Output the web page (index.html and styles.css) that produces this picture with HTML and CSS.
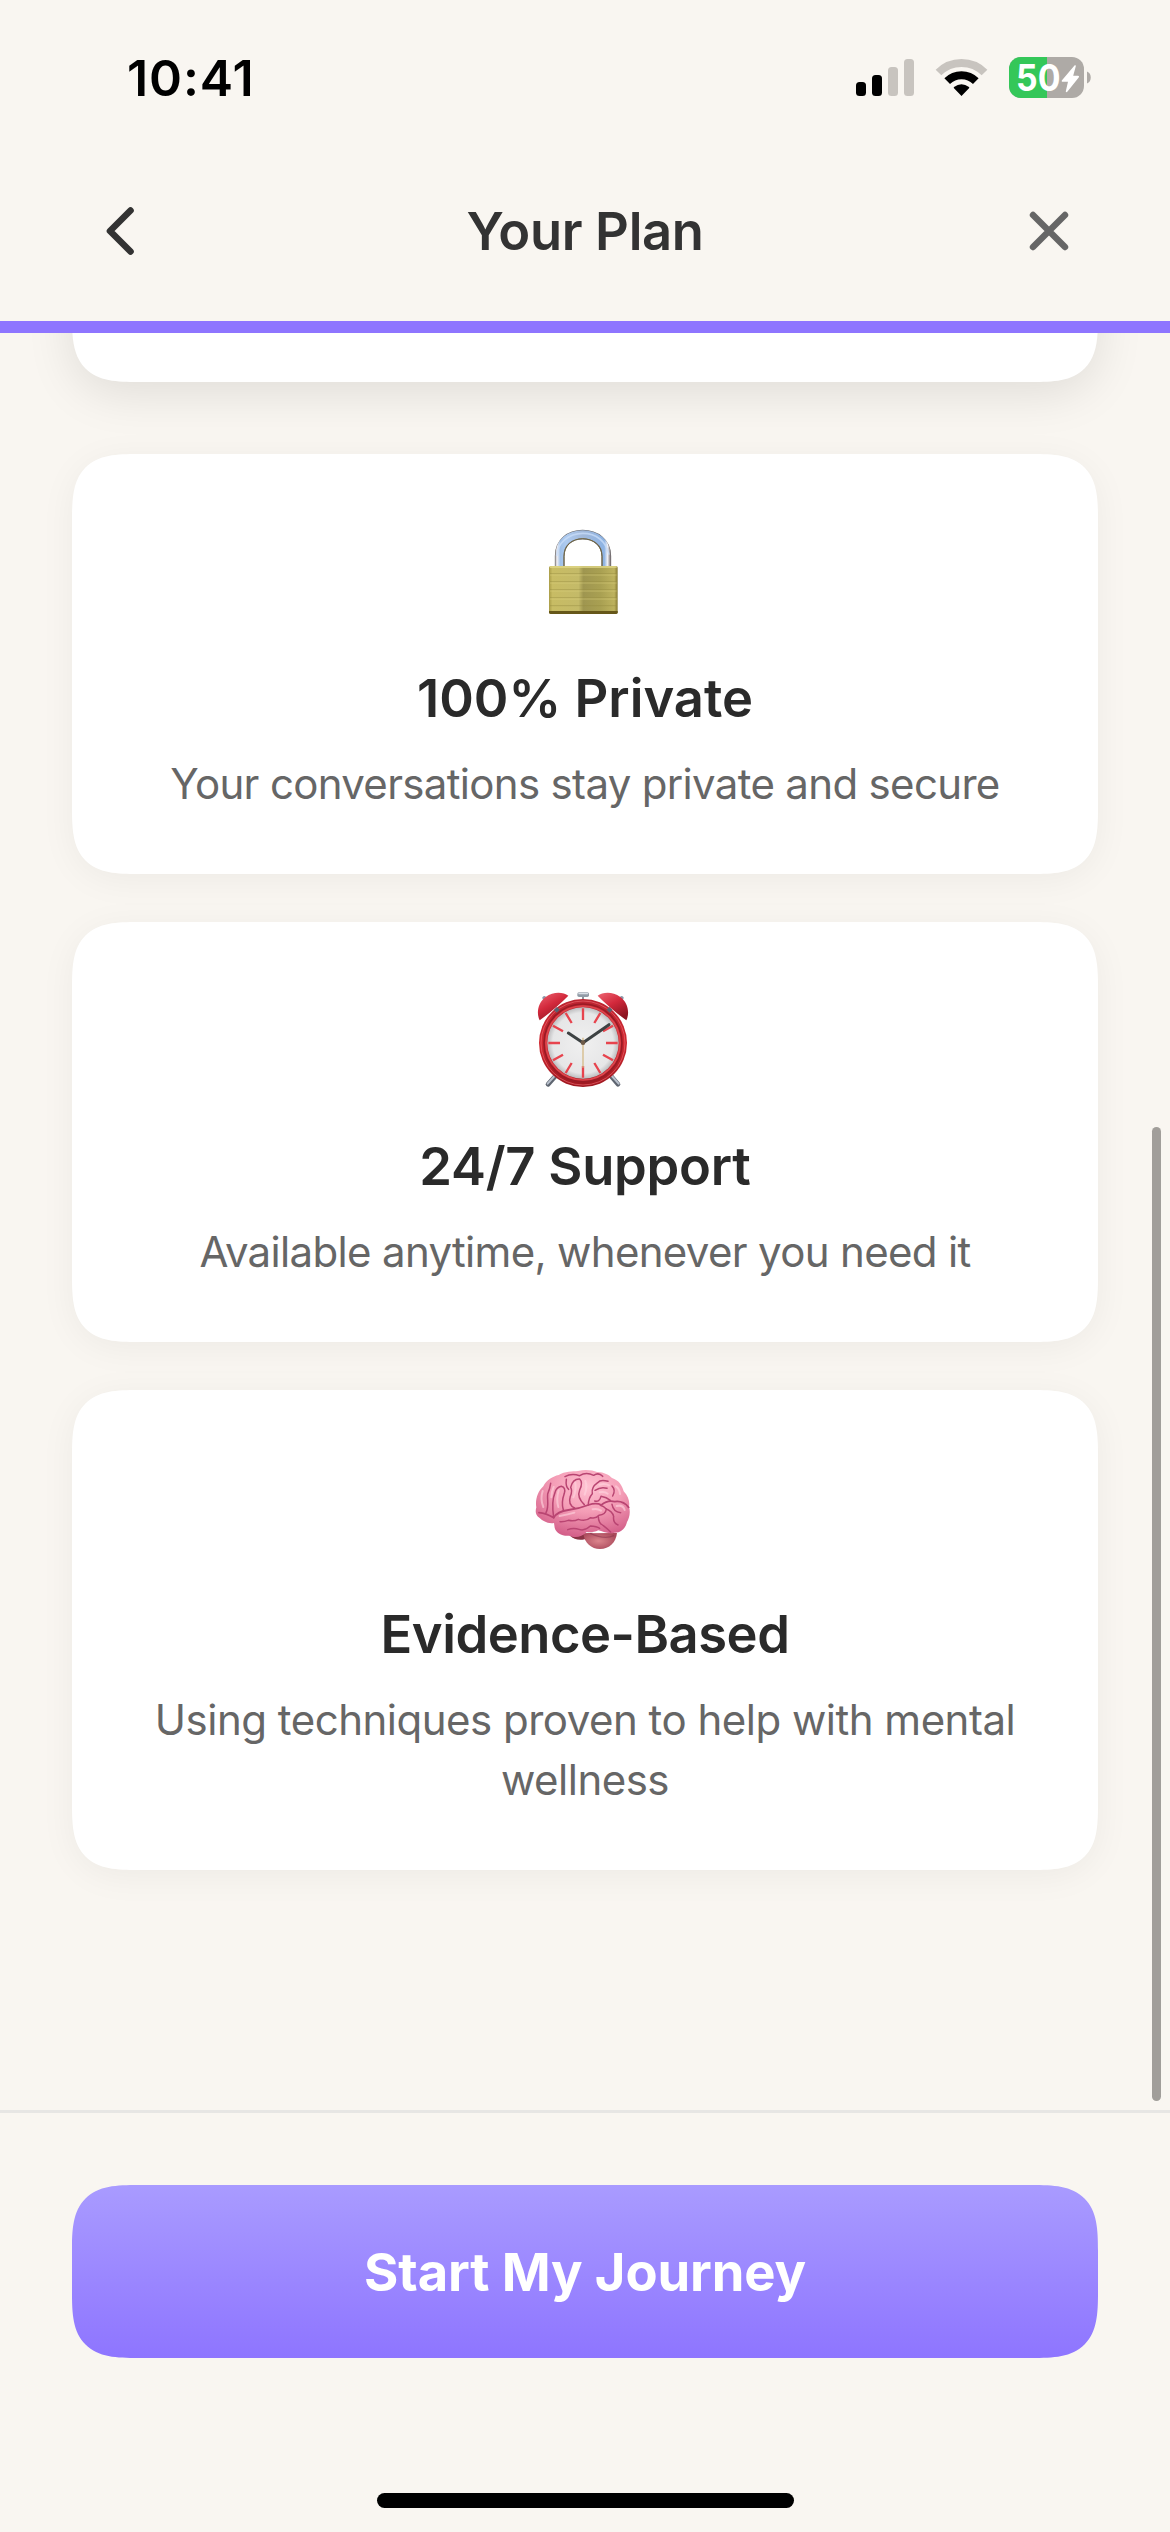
FILE: index.html
```html
<!DOCTYPE html>
<html lang="en">
<head>
<meta charset="utf-8">
<meta name="viewport" content="width=device-width">
<title>Your Plan</title>
<link rel="stylesheet" href="styles.css">
</head>
<body>
<div class="screen">
  <div class="status-bar">
    <span class="time">10:41</span>
    <svg class="status-icons" viewBox="0 -9 236 60" width="236" height="60" aria-hidden="true">
      <g>
        <rect x="0" y="25" width="10" height="14" rx="3.5"/>
        <rect x="16" y="18" width="10" height="21" rx="3.5"/>
        <rect x="32" y="10" width="10" height="29" rx="3.5" fill="#c8c4bf"/>
        <rect x="48" y="2" width="10" height="37" rx="3.5" fill="#c8c4bf"/>
      </g>
      <g fill="none" stroke-width="8">
        <path d="M82.500 15.500A32.500 32.500 0 0 1 128.500 15.500" stroke="#c8c4bf"/>
        <path d="M91.200 24.200A20.300 20.300 0 0 1 119.800 24.200" stroke="#000"/>
      </g>
      <path d="M105.500 39L98 31.300C97.600 30.900 97.600 30.300 98 29.900Q105.500 24.800 113 29.900C113.400 30.300 113.400 30.900 113 31.300Z"/>
      <rect x="153" y="0" width="75" height="41" rx="12" fill="#aeaaa6"/>
      <path d="M191 0V41H165A12 12 0 0 1 153 29V12A12 12 0 0 1 165 0Z" fill="#34c759"/>
      <path d="M231 14.500C236 16 236 25 231 26.500Z" fill="#aeaaa6"/>
      <text class="battery-level" x="160" y="34" textLength="44.500" lengthAdjust="spacingAndGlyphs">50</text>
      <path d="M218.500 8.500L206 23.200C205.300 24 205.700 24.800 206.700 24.800H212L209.800 34.300C209.700 35.300 210.700 35.500 211.300 34.700L222.700 20.500C223.400 19.500 223 18.800 222 18.800H217.200L219.800 9.300C220 8.100 219.200 7.800 218.500 8.500Z" fill="#fff"/>
    </svg>
  </div>

  <header class="nav">
    <svg class="nav-icon" viewBox="0 0 44 60" width="44" height="60" aria-label="Back"><path d="M31.500 9.500L11 30L31.500 50.500" fill="none" stroke="#333" stroke-width="6.600" stroke-linecap="round" stroke-linejoin="round"/></svg>
    <h1 class="nav-title">Your Plan</h1>
    <svg class="nav-icon" viewBox="0 0 44 60" width="44" height="60" aria-label="Close"><path d="M6 14L38 46M38 14L6 46" fill="none" stroke="#666" stroke-width="6.400" stroke-linecap="round"/></svg>
  </header>
  <div class="progress"></div>

  <main class="content">
    <div class="plan-card"></div>

    <section class="card">
      <svg class="emoji" viewBox="0 0 390 360" aria-hidden="true">
        <defs>
          <linearGradient id="brass" x1="0" x2="1" y1="0" y2="0"><stop offset="0" stop-color="#aa9d48"/><stop offset=".05" stop-color="#c8bc64"/><stop offset=".43" stop-color="#c4ba68"/><stop offset=".5" stop-color="#9f9650"/><stop offset=".75" stop-color="#a9a052"/><stop offset=".95" stop-color="#bdb25e"/><stop offset="1" stop-color="#877a34"/></linearGradient>
          <linearGradient id="steel" x1="104" x2="273" y1="0" y2="0" gradientUnits="userSpaceOnUse"><stop offset="0" stop-color="#6e6868"/><stop offset=".04" stop-color="#f3f1f4"/><stop offset=".1" stop-color="#9fc0e8"/><stop offset=".2" stop-color="#aecbf0"/><stop offset=".5" stop-color="#a2b9da"/><stop offset=".88" stop-color="#8db3e4"/><stop offset=".94" stop-color="#f1f0f4"/><stop offset="1" stop-color="#665d60"/></linearGradient>
        </defs>
        <path d="M119 172V138C119 97 150 74 188 74S259 97 259 138V172" fill="none" stroke="#6c6a6b" stroke-width="29"/>
        <path d="M118 172V138C118 96 150 73 188 73S260 96 260 138V172" fill="none" stroke="url(#steel)" stroke-width="25"/>
        <path d="M132 168V140C132 106 157 86 188 86S246 106 246 140V168" fill="none" stroke="#70653f" stroke-width="3"/>
        <path d="M110 138C113 98 146 70 188 70S258 94 267 134" fill="none" stroke="#c8dcf7" stroke-width="5" opacity=".8"/>
        <rect x="87" y="168" width="206" height="144" rx="5" fill="url(#brass)"/>
        <path d="M90 171H290" stroke="#e2d988" stroke-width="5"/>
        <path d="M90 191H290M90 215H290M90 239H290M90 263H290M90 287H290" stroke="#958b40" stroke-width="2.500" opacity=".55"/>
        <path d="M90 195H290M90 219H290M90 243H290M90 267H290" stroke="#ddd37f" stroke-width="2.500" opacity=".6"/>
        <path d="M87 303H293V307Q293 312 288 312H92Q87 312 87 307Z" fill="#665719"/>
      </svg>
      <h2 class="card-title">100% Private</h2>
      <p class="card-text">Your conversations stay private and secure</p>
    </section>

    <section class="card">
      <svg class="emoji" viewBox="0 9 390 360" aria-hidden="true">
        <defs>
          <linearGradient id="bell" x1="0" x2=".6" y1="0" y2="1"><stop offset="0" stop-color="#ed6673"/><stop offset=".5" stop-color="#d3293c"/><stop offset="1" stop-color="#8d1420"/></linearGradient>
          <linearGradient id="rim" x1="0" x2="0" y1="0" y2="1"><stop offset="0" stop-color="#ba2430"/><stop offset=".5" stop-color="#cf2830"/><stop offset="1" stop-color="#9e1820"/></linearGradient>
          <radialGradient id="dial"><stop offset="0" stop-color="#f0f0f0"/><stop offset=".85" stop-color="#e6e6e7"/><stop offset="1" stop-color="#bdbdbf"/></radialGradient>
        </defs>
        <g stroke-linecap="round">
          <path d="M108 301L84 328M271 301L294 328" stroke="#5e6570" stroke-width="14"/>
          <path d="M106 300L83 326M273 300L296 326" stroke="#b9c1cd" stroke-width="6"/>
          <path d="M73 69L79 76M305 69L299 76" stroke="#8a98a8" stroke-width="12"/>
        </g>
        <path d="M189 63V86" stroke="#8d949d" stroke-width="6"/>
        <rect x="172" y="52" width="35" height="14" rx="5" fill="#929ca7"/>
        <rect x="175" y="53" width="29" height="5" rx="2" fill="#d9e0e7"/>
        <path d="M59 136C48 114 54 83 77 66C101 48 130 51 145 62Q109 99 59 136Z" fill="url(#bell)"/>
        <path d="M319 136C330 114 324 83 301 66C277 48 248 51 233 62Q269 99 319 136Z" fill="url(#bell)"/>
        <circle cx="189" cy="204" r="132" fill="url(#rim)"/>
        <circle cx="189" cy="204" r="126" fill="none" stroke="#ef6972" stroke-width="3" opacity=".65"/>
        <circle cx="189" cy="204" r="117" fill="none" stroke="#991b25" stroke-width="5"/>
        <circle cx="189" cy="204" r="111" fill="none" stroke="#df454c" stroke-width="5"/>
        <path d="M106 109L115 100M273 109L264 100" stroke="#56616f" stroke-width="12"/>
        <circle cx="189" cy="204" r="107" fill="url(#dial)"/>
        <g stroke="#e7444e" stroke-width="7">
          <path d="M189 100V135M189 273V308M85 204H120M258 204H293"/>
          <path d="M137 114L155 144M241 114L223 144M99 152L129 169M279 152L249 169M99 256L129 239M279 256L249 239M137 294L155 264M241 294L223 264"/>
        </g>
        <path d="M189 188V278" stroke="#d5bb89" stroke-width="4"/>
        <path d="M145 174L189 203L267 149" fill="none" stroke="#3d4243" stroke-width="9" stroke-linecap="round" stroke-linejoin="round"/>
        <circle cx="189" cy="203" r="7" fill="#6d5a48"/>
      </svg>
      <h2 class="card-title tight">24/7 Support</h2>
      <p class="card-text">Available anytime, whenever you need it</p>
    </section>

    <section class="card">
      <svg class="emoji" viewBox="0 -12 390 360" aria-hidden="true">
        <defs>
          <radialGradient id="cortex" cx=".55" cy=".25" r=".75"><stop offset="0" stop-color="#ffc2d2"/><stop offset=".5" stop-color="#f49db6"/><stop offset="1" stop-color="#d4608a"/></radialGradient>
          <radialGradient id="cerebellum" cx=".45" cy=".5" r=".6"><stop offset="0" stop-color="#dc858d"/><stop offset="1" stop-color="#a9485a"/></radialGradient>
          <filter id="soft"><feGaussianBlur stdDeviation="1.600"/></filter>
        </defs>
        <path d="M148 256Q168 274 194 268L218 248Z" fill="#8b3346"/>
        <path d="M190 250C193 280 214 297 240 297C268 297 288 277 291 249Z" fill="url(#cerebellum)"/>
        <path d="M102 219C82 222 66 211 59 204C45 196 46 183 49 172C45 150 53 124 70 109C79 90 99 79 116 75C135 63 158 65 174 63C197 57 218 61 231 66C249 65 268 75 276 84C296 90 307 107 311 124C325 139 330 155 327 170C333 190 326 207 321 216C316 239 299 249 283 248C264 253 248 244 235 241C220 248 210 247 200 246C184 264 162 263 148 257C128 260 106 247 104 233Z" fill="url(#cortex)"/>
        <g filter="url(#soft)" fill="none" stroke="#b94572" stroke-width="4.500" stroke-linecap="round" stroke-linejoin="round">
          <path d="M57 188Q78 190 101 203Q112 184 145 180T205 165Q229 157 244 165Q263 149 284 155Q309 151 326 172" stroke-width="5.500"/>
          <path d="M120 215Q132 216 145 211Q162 215 175 208Q196 216 212 203Q228 207 237 196Q257 194 259 177Q251 169 241 166"/>
          <path d="M143 239Q161 232 177 238Q194 244 211 228Q230 229 239 235"/>
          <path d="M78 188C88 170 81 151 83 132Q90 115 92 100"/>
          <path d="M101 203Q94 153 105 128Q109 112 124 109Q138 112 133 130Q123 158 130 180"/>
          <path d="M139 88Q136 110 146 118M164 174Q143 165 151 139Q158 123 152 112Q158 86 179 87Q190 98 179 120Q170 142 193 164"/>
          <path d="M205 165Q205 144 217 131Q213 112 233 98Q241 88 264 94"/>
          <path d="M225 121Q243 109 261 115M224 153Q238 158 243 139Q260 142 271 151"/>
          <path d="M276 108Q288 120 278 138"/>
          <path d="M235 200Q235 219 250 227Q264 238 272 246M259 177Q277 184 281 199Q278 218 294 225M276 163Q280 186 302 188"/>
          <path d="M135 80Q154 69 179 77Q198 65 221 76Q236 66 248 79"/>
        </g>
        <g filter="url(#soft)" fill="none" stroke="#ffd6e0" stroke-width="6" stroke-linecap="round" opacity=".6">
          <path d="M68 123Q60 147 70 171M101 111Q94 126 94 142M116 121Q108 150 115 171M166 98Q169 122 160 142M196 93Q203 110 194 134M238 104Q256 99 267 106M239 127Q254 124 263 131M288 109Q299 116 300 132M119 198Q145 194 163 188M218 178Q232 174 243 182M290 168Q309 163 314 180"/>
        </g>
        <path d="M211 250Q253 270 282 257" fill="none" stroke="#842f49" stroke-width="4" opacity=".5"/>
      </svg>
      <h2 class="card-title tighter">Evidence-Based</h2>
      <p class="card-text loose">Using techniques proven to help with mental wellness</p>
    </section>
    <div class="scrollbar"></div>
  </main>

  <footer class="footer">
    <button class="cta">Start My Journey</button>
    <div class="home-indicator"></div>
  </footer>
</div>
</body>
</html>
```
FILE: styles.css
```css
* { box-sizing: border-box; }
body {
  margin: 0;
  background: #f9f6f1;
  font-family: Inter, "Liberation Sans", sans-serif;
}
h1, h2, p { margin: 0; }
svg { display: block; flex: none; }

.screen {
  display: flex;
  flex-direction: column;
  width: 1170px;
  height: 2532px;
  overflow: hidden;
}

.status-bar {
  display: flex;
  justify-content: space-between;
  align-items: center;
  height: 141px;
  padding: 15px 78px 0 127px;
}
.time {
  font-size: 50px;
  font-weight: 600;
  line-height: 60px;
  letter-spacing: 0.9px;
  color: #000;
}
.status-icons { overflow: visible; }
.battery-level {
  font-size: 37px;
  font-weight: 700;
  fill: #fff;
}

.nav {
  display: flex;
  justify-content: space-between;
  align-items: center;
  height: 180px;
  padding: 0 99px;
}
.nav-title {
  font-size: 52.5px;
  font-weight: 600;
  line-height: 72px;
  letter-spacing: -0.35px;
  color: #333;
}
.progress {
  flex: none;
  height: 12px;
  background: #8e75ff;
}

.content {
  position: relative;
  display: flex;
  flex-direction: column;
  gap: 48px;
  height: 1777px;
  padding: 0 72px;
  overflow: hidden;
}
.plan-card,
.card,
.cta {
  border-radius: 66px;
  corner-shape: superellipse(1.6);
}
/* Lower end of the summary card, scrolled under the header. */
.plan-card {
  flex: none;
  height: 349px;
  margin-top: -300px;
  margin-bottom: 24px;
  background: #fff;
  box-shadow: 0 12px 48px rgba(0, 0, 0, 0.1);
}
.card {
  flex: none;
  display: flex;
  flex-direction: column;
  align-items: center;
  padding: 56px 72px 60px;
  background: #fff;
  box-shadow: 0 6px 36px rgba(0, 0, 0, 0.05);
  text-align: center;
}
.emoji { width: 130px; height: 120px; }
.card-title {
  margin-top: 32px;
  font-size: 52.5px;
  font-weight: 600;
  line-height: 72px;
  color: #2a2a2a;
}
.card-title.tight { letter-spacing: -0.25px; }
.card-title.tighter { letter-spacing: -0.49px; }
.card-text {
  margin-top: 20px;
  font-size: 42px;
  line-height: 60px;
  letter-spacing: -0.67px;
  color: #666;
}
.card-text.loose { letter-spacing: -0.5px; }

.scrollbar {
  position: absolute;
  top: 794px;
  right: 9px;
  width: 9px;
  height: 974px;
  border-radius: 5px;
  background: #a19e9a;
}

.footer {
  display: flex;
  flex-direction: column;
  align-items: center;
  justify-content: space-between;
  flex: 1;
  padding: 72px 72px 24px;
  border-top: 3px solid #e7e6e4;
}
.cta {
  width: 1026px;
  height: 173px;
  padding: 0;
  border: 0;
  background: linear-gradient(#a99bff, #8e75ff);
  font: 700 52.5px/72px Inter, "Liberation Sans", sans-serif;
  letter-spacing: -0.12px;
  color: #fff;
}
.home-indicator {
  width: 417px;
  height: 15px;
  border-radius: 8px;
  background: #000;
}
```
